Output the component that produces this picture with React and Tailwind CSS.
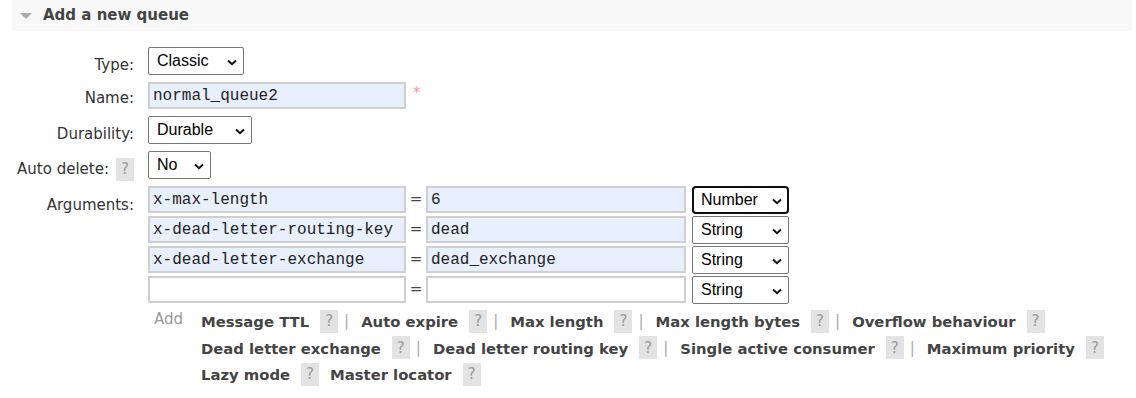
const linkLines = [
  { pipes: true, items: ['Message TTL', 'Auto expire', 'Max length', 'Max length bytes', 'Overflow behaviour'] },
  { pipes: true, items: ['Dead letter exchange', 'Dead letter routing key', 'Single active consumer', 'Maximum priority'] },
  { pipes: false, items: ['Lazy mode', 'Master locator'] },
];

const args = [
  { key: 'x-max-length', value: '6', type: 'Number', focused: true },
  { key: 'x-dead-letter-routing-key', value: 'dead', type: 'String' },
  { key: 'x-dead-letter-exchange', value: 'dead_exchange', type: 'String' },
  { key: '', value: '', type: 'String' },
];

function Help() {
  return (
    <span className="inline-flex items-center justify-center w-[18px] h-[23px] bg-[#e3e3e3] text-[#999] font-normal text-[15px]">
      ?
    </span>
  );
}

function Label({ children, className = '' }) {
  return (
    <div className={`w-[134px] h-[23px] shrink-0 flex items-center justify-end gap-[7px] text-[#333] ${className}`}>
      {children}
    </div>
  );
}

function Select({ value, className = '', focused = false }) {
  return (
    <div className={`relative h-[28px] ${className}`}>
      <select
        defaultValue={value}
        className={`appearance-none w-full h-full bg-white font-['Liberation_Sans',Arial,sans-serif] text-[16px] text-black outline-none ${
          focused ? 'border-2 border-[#101010] rounded-[4px] pl-[7px]' : 'border border-[#767676] rounded-[2px] pl-[8px]'
        }`}
      >
        <option>{value}</option>
      </select>
      <svg
        className="absolute right-[7px] top-[12px] pointer-events-none"
        width="10"
        height="7"
        viewBox="0 0 10 7"
        fill="none"
      >
        <path d="M1 1.5 L5 5.2 L9 1.5" stroke="#111" strokeWidth="2" />
      </svg>
    </div>
  );
}

function TextInput({ value, className = '' }) {
  return (
    <input
      readOnly
      value={value}
      className={`h-[27px] border-2 border-[#cfcfcf] pl-[3px] font-['Liberation_Mono','Courier_New',monospace] text-[16px] text-[#222] outline-none ${
        value ? 'bg-[#e8f0fe]' : 'bg-white'
      } ${className}`}
    />
  );
}

export default function App() {
  return (
    <div className="w-[1136px] h-[398px] overflow-hidden bg-white font-['DejaVu_Sans',Verdana,sans-serif] text-[15px] text-[#444]">
      <div className="ml-[12px] w-[1120px] h-[31px] bg-[#f8f8f8] flex items-center pl-[8px]">
        <svg width="12" height="6" viewBox="0 0 12 6">
          <polygon points="0,0 12,0 6,6" fill="#aaa" />
        </svg>
        <h2 className="ml-[11px] font-bold text-[#444]">Add a new queue</h2>
      </div>

      <div className="mt-[16px]">
        <div className="flex h-[35px]">
          <Label className="mt-[7px]">Type:</Label>
          <Select value="Classic" className="ml-[14px] w-[96px]" />
        </div>

        <div className="flex h-[34px]">
          <Label className="mt-[5px]">Name:</Label>
          <TextInput value="normal_queue2" className="ml-[14px] w-[258px]" />
          <span className="ml-[7px] h-[23px] leading-[23px] text-[#f99]">*</span>
        </div>

        <div className="flex h-[35px]">
          <Label className="mt-[7px]">Durability:</Label>
          <Select value="Durable" className="ml-[14px] w-[104px]" />
        </div>

        <div className="flex h-[35px]">
          <Label className="mt-[7px]">
            Auto delete:
            <Help />
          </Label>
          <Select value="No" className="ml-[14px] w-[63px]" />
        </div>

        <div className="flex">
          <Label className="mt-[8px]">Arguments:</Label>
          <div className="ml-[14px] flex flex-col">
            {args.map((a, i) => (
              <div key={i} className="flex h-[30px]">
                <TextInput value={a.key} className="w-[258px]" />
                <span className="w-[20px] h-[27px] flex items-center justify-center text-[#444]">=</span>
                <TextInput value={a.value} className="w-[260px]" />
                <Select value={a.type} focused={a.focused} className="ml-[6px] w-[97px]" />
              </div>
            ))}
          </div>
        </div>

        <div className="flex">
          <div className="w-[148px] shrink-0" />
          <div className="w-[53px] shrink-0 pl-[6px] h-[23px] leading-[23px] mt-[2px] text-[#999]">Add</div>
          <div className="flex flex-col mt-[2px]">
            {linkLines.map((line, li) => (
              <div key={li} className="flex items-center h-[26.5px] whitespace-nowrap">
                {line.items.map((item, i) => (
                  <div key={item} className="flex items-center">
                    {i > 0 && (line.pipes ? (
                      <span className="ml-[6px] mr-[12px] text-[#aaa]">|</span>
                    ) : (
                      <span className="w-[11px]" />
                    ))}
                    <span className="relative top-[1px] font-bold text-[14.8px] text-[#444] cursor-pointer">
                      {item}
                    </span>
                    <span className="ml-[11px] flex">
                      <Help />
                    </span>
                  </div>
                ))}
              </div>
            ))}
          </div>
        </div>
      </div>
    </div>
  );
}
